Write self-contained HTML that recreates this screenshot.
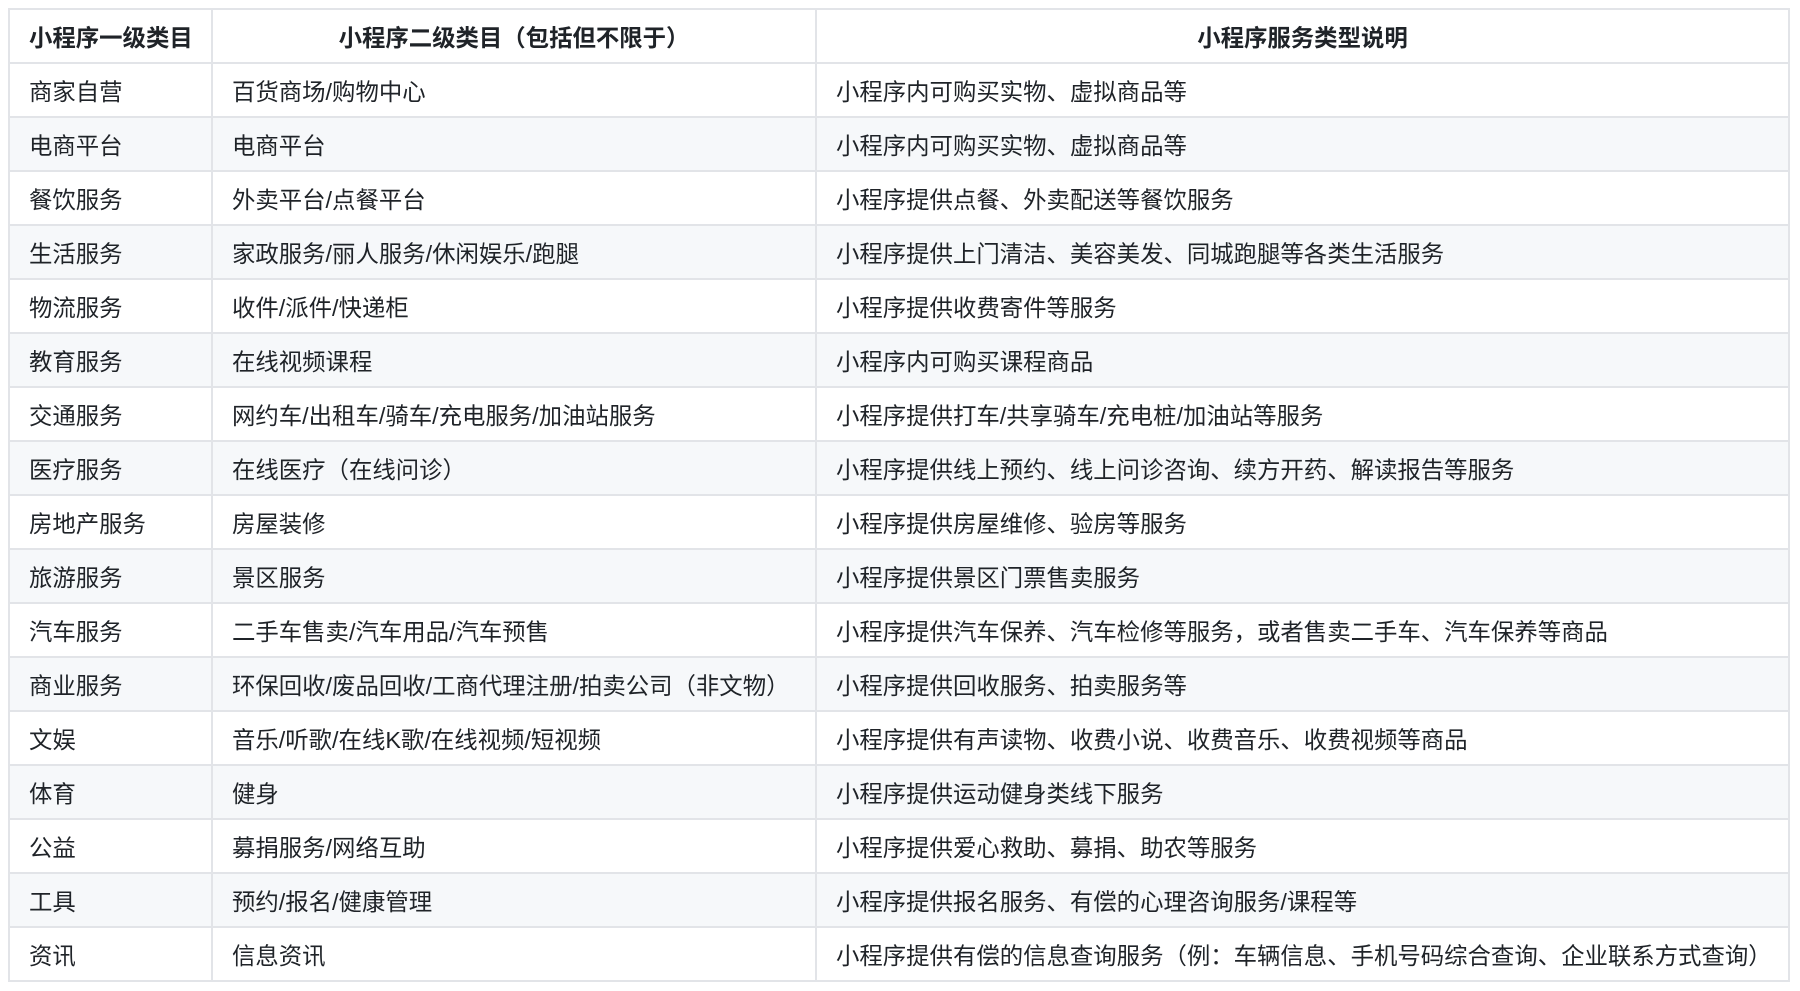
<!DOCTYPE html>
<html><head><meta charset="utf-8"><style>
html,body{margin:0;padding:0;background:#fff;width:1800px;height:991px;overflow:hidden}
table{position:absolute;left:8px;top:8px;border-collapse:collapse;font-family:"Liberation Sans","Noto Sans CJK SC",sans-serif;font-size:23.4px;color:#1f2328}
tr{height:54px}
td,th{border:2px solid #e2e4e8;padding:0 0 0 19px;text-align:left;white-space:nowrap;box-sizing:border-box}
th{font-weight:bold;text-align:center;padding:0}
th:first-child{text-align:left;padding-left:19px}
tr:nth-child(odd) td{background:#f6f8fa}
col.a{width:203px}col.b{width:604px}col.c{width:973px}
</style></head><body>
<table>
<colgroup><col class="a"><col class="b"><col class="c"></colgroup>
<tr><th>小程序一级类目</th><th>小程序二级类目（包括但不限于）</th><th>小程序服务类型说明</th></tr>
<tr><td>商家自营</td><td>百货商场/购物中心</td><td>小程序内可购买实物、虚拟商品等</td></tr>
<tr><td>电商平台</td><td>电商平台</td><td>小程序内可购买实物、虚拟商品等</td></tr>
<tr><td>餐饮服务</td><td>外卖平台/点餐平台</td><td>小程序提供点餐、外卖配送等餐饮服务</td></tr>
<tr><td>生活服务</td><td>家政服务/丽人服务/休闲娱乐/跑腿</td><td>小程序提供上门清洁、美容美发、同城跑腿等各类生活服务</td></tr>
<tr><td>物流服务</td><td>收件/派件/快递柜</td><td>小程序提供收费寄件等服务</td></tr>
<tr><td>教育服务</td><td>在线视频课程</td><td>小程序内可购买课程商品</td></tr>
<tr><td>交通服务</td><td>网约车/出租车/骑车/充电服务/加油站服务</td><td>小程序提供打车/共享骑车/充电桩/加油站等服务</td></tr>
<tr><td>医疗服务</td><td>在线医疗（在线问诊）</td><td>小程序提供线上预约、线上问诊咨询、续方开药、解读报告等服务</td></tr>
<tr><td>房地产服务</td><td>房屋装修</td><td>小程序提供房屋维修、验房等服务</td></tr>
<tr><td>旅游服务</td><td>景区服务</td><td>小程序提供景区门票售卖服务</td></tr>
<tr><td>汽车服务</td><td>二手车售卖/汽车用品/汽车预售</td><td>小程序提供汽车保养、汽车检修等服务，或者售卖二手车、汽车保养等商品</td></tr>
<tr><td>商业服务</td><td>环保回收/废品回收/工商代理注册/拍卖公司（非文物）</td><td>小程序提供回收服务、拍卖服务等</td></tr>
<tr><td>文娱</td><td>音乐/听歌/在线K歌/在线视频/短视频</td><td>小程序提供有声读物、收费小说、收费音乐、收费视频等商品</td></tr>
<tr><td>体育</td><td>健身</td><td>小程序提供运动健身类线下服务</td></tr>
<tr><td>公益</td><td>募捐服务/网络互助</td><td>小程序提供爱心救助、募捐、助农等服务</td></tr>
<tr><td>工具</td><td>预约/报名/健康管理</td><td>小程序提供报名服务、有偿的心理咨询服务/课程等</td></tr>
<tr><td>资讯</td><td>信息资讯</td><td>小程序提供有偿的信息查询服务（例：车辆信息、手机号码综合查询、企业联系方式查询）</td></tr>
</table>
</body></html>
